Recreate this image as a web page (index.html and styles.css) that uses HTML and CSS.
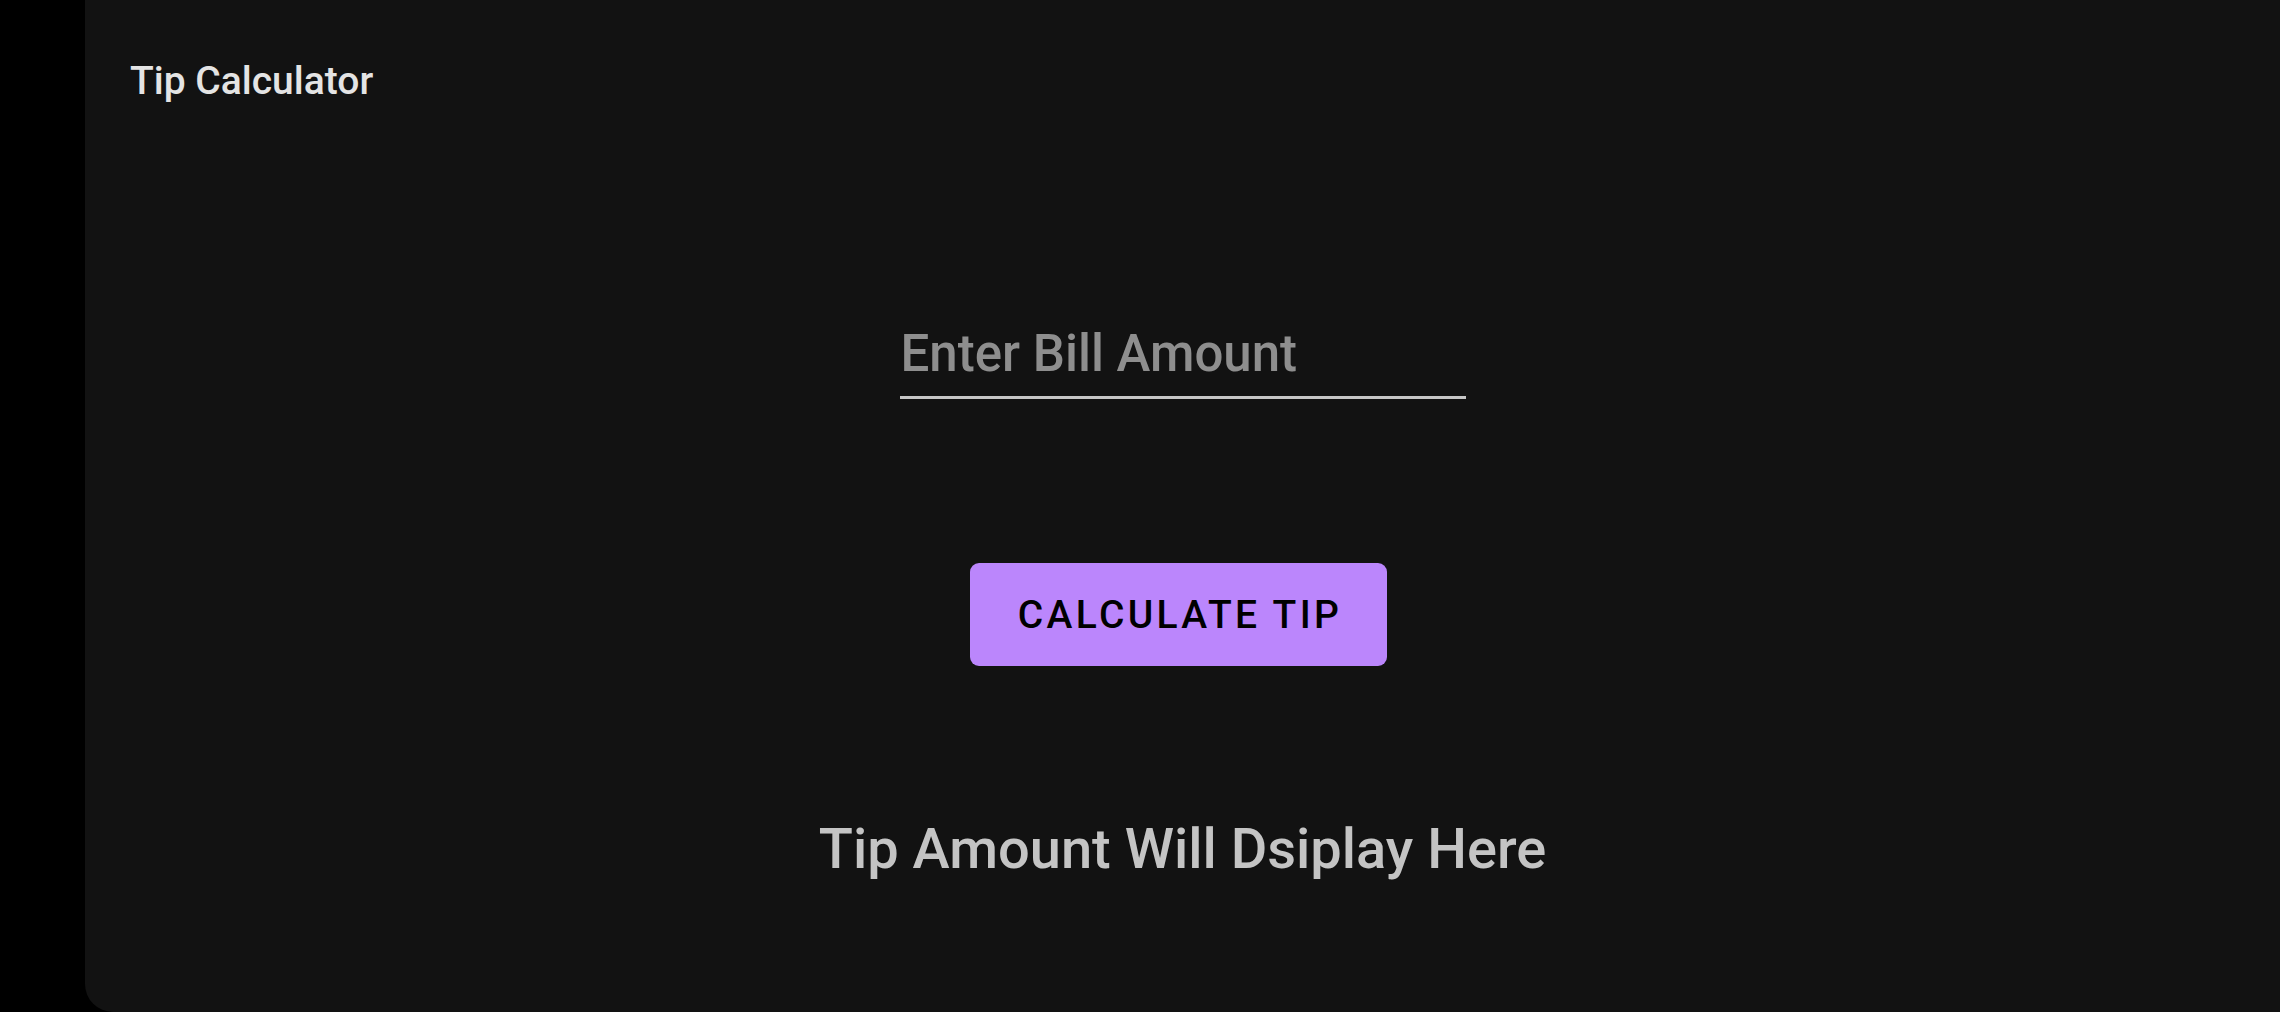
FILE: index.html
```html
<!DOCTYPE html>
<html lang="en">
<head>
<meta charset="utf-8">
<title>Tip Calculator</title>
<link rel="stylesheet" href="styles.css">
</head>
<body>
<div class="screen">
  <div class="gutter"></div>
  <main class="panel">
    <header class="appbar">
      <h1 class="title">Tip Calculator</h1>
    </header>
    <section class="content">
      <input class="bill-input" type="text" placeholder="Enter Bill Amount">
      <button class="calc-btn" type="button">CALCULATE TIP</button>
      <p class="result">Tip Amount Will Dsiplay Here</p>
    </section>
  </main>
</div>
</body>
</html>
```
FILE: styles.css
```css
html, body {
  margin: 0;
  padding: 0;
  background: #000;
  height: 100%;
  overflow: hidden;
}

body {
  font-family: Roboto, "Noto Sans", sans-serif;
}

.screen {
  display: flex;
  height: 1012px;
}

.gutter {
  width: 85px;
  flex: none;
  background: #000;
}

.panel {
  flex: 1;
  background: #121212;
  border-bottom-left-radius: 28px;
  display: flex;
  flex-direction: column;
}

.appbar {
  padding: 62px 0 0 45px;
}

.title {
  margin: 0;
  font-size: 39px;
  line-height: 1;
  font-weight: 500;
  color: #e4e4e4;
}

.content {
  display: flex;
  flex-direction: column;
  align-items: center;
}

.bill-input {
  margin-top: 226px;
  box-sizing: content-box;
  width: 565px;
  height: 52px;
  padding: 0 0 17px 1px;
  border: 0;
  border-bottom: 3px solid #c6c6c6;
  background: transparent;
  font-family: Roboto, "Noto Sans", sans-serif;
  font-size: 51px;
  font-weight: 500;
  color: #e6e6e6;
  outline: none;
}

.bill-input::placeholder {
  color: #8e8e8e;
  opacity: 1;
}

.calc-btn {
  margin-top: 164px;
  margin-right: 8px;
  width: 417px;
  height: 103px;
  border: 0;
  border-radius: 9px;
  background: #bb86fc;
  color: #000;
  font-family: Roboto, "Noto Sans", sans-serif;
  font-size: 39px;
  font-weight: 500;
  letter-spacing: 0.085em;
  display: flex;
  align-items: center;
  justify-content: center;
  padding: 0 0 0 3px;
}

.result {
  margin: 155px 0 0;
  font-size: 56px;
  line-height: 1;
  font-weight: 500;
  color: #c4c4c4;
}
```
